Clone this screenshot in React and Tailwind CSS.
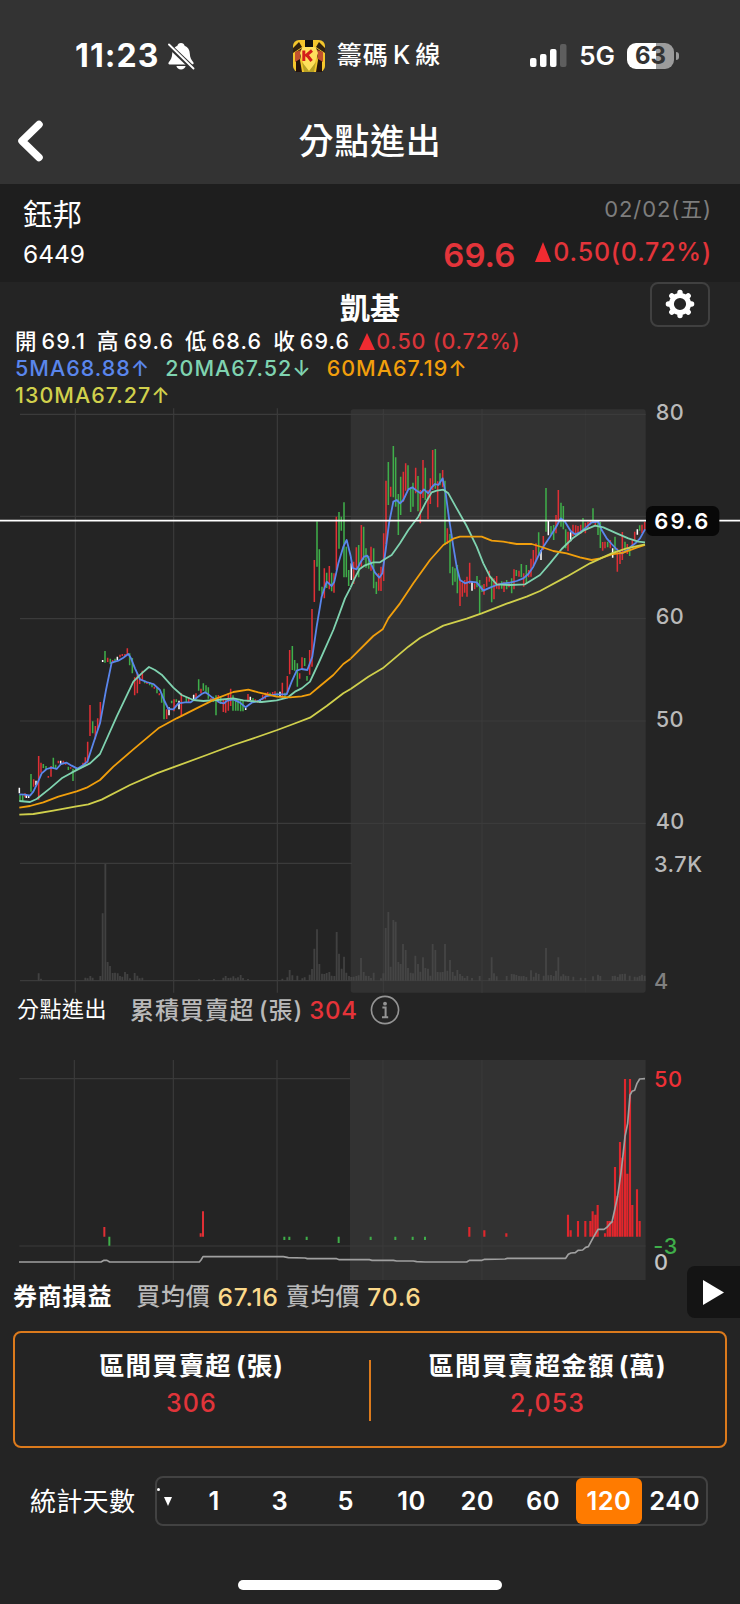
import { useState } from 'react'

const FONT = "font-['Inter','Noto_Sans_CJK_TC',sans-serif]"

const DIAS = ['1', '3', '5', '10', '20', '60', '120', '240']

const COLORS = { up: '#e02f35', down: '#3fae4a', flat: '#ffffff' }

// The charts use 3 units per pixel. "past" starts at the left edge,
// "range" has its origin at the start of the selected 120 days.
const RANGE_X = 1050

const CANDLES = {
  past: {
    up: 'M75 1180V1192M101 1138V1160M116 1068V1199M123 1088V1118M145 1128V1133M153 1098V1130M175 1082V1090M190 1082V1092M197 1090V1094M212 1102V1106M235 1102V1108M249 1088V1102M256 1072V1096M263 1025V1088M270 915V1008M286 978V1018M293 955V990M301 906V968M323 773V786M338 780V790M360 764V772M367 762V768M375 762V768M382 745V764M404 832V886M412 820V880M419 832V852M427 812V840M441 846V852M463 860V866M478 880V886M500 928V957M522 898V934M544 880V950M566 892V908M588 880V896M603 866V880M633 894V900M655 885V908M670 898V936M677 900V938M685 880V932M692 866V918M744 882V906M766 898V906M773 900V908M788 884V900M796 878V898M803 876V888M818 876V886M825 874V888M847 848V890M862 828V880M869 750V823M899 820V836M906 772V810M929 750V824M936 627V800M943 480V606M973 505V595M988 498V568M1002 520V578M1009 350V510',
    down: 'M60 1184V1204M68 1186V1206M93 1122V1175M130 1092V1104M138 1098V1108M160 1073V1106M167 1094V1108M205 1100V1110M219 1106V1143M227 1104V1112M278 964V1000M315 753V788M331 776V792M345 776V786M389 760V796M397 774V820M434 842V850M449 846V856M456 850V862M471 864V880M485 880V908M492 866V958M515 902V910M529 898V906M559 890V906M596 838V872M610 850V872M618 856V880M625 862V896M640 890V906M648 886V946M662 888V912M699 886V932M707 898V932M714 898V932M722 900V934M729 902V934M759 894V906M781 898V906M810 878V886M832 878V888M855 878V894M877 738V810M884 780V812M892 790V860M914 774V798M921 828V842M951 364V500M958 448V572M966 560V584M980 518V564M995 518V574M1017 336V446M1024 350V392M1032 307V532M1039 440V532M1046 510V558',
    flat: 'M58 1163V1180M79 1185V1194M86 1187V1194M108 1142V1156M182 1082V1094M308 780V786M352 770V780M507 922V946M537 902V928M581 884V902M737 924V930M751 890V900M780 899V908M840 875V888',
  },
  range: {
    up: 'M11 485V552M19 442V508M34 375V500M63 440V512M86 520V572M93 500V573M101 400V543M108 242V432M122 260V290M160 215V305M167 190V272M197 203V280M211 270V370M219 180V294M234 270V358M241 235V312M248 150V270M263 244V322M278 210V262M292 385V432M330 540V618M337 548V590M344 540V578M351 530V590M359 488V552M374 550V568M402 552V584M410 530V560M418 512V545M432 535V598M440 528V566M447 548V568M462 545V576M477 545V562M492 508V568M507 512V530M521 520V560M536 510V532M543 476V530M550 450V498M558 430V482M580 408V450M618 345V400M625 270V368M654 395V453M669 374V408M677 376V400M684 378V402M692 374V402M706 368V400M714 366V384M721 360V374M736 362V376M758 426V452M765 425V445M781 420V445M802 445V515M810 462V492M817 396V480M832 432V462M847 420V440M854 395V422M876 374V400M884 366V390',
    down: 'M26 435V532M41 380V480M48 445V503M56 468V506M71 445V565M79 545V582M115 186V315M130 138V292M137 172V320M145 282V405M152 230V345M174 196V268M182 262V336M189 248V320M204 228V334M226 203V300M256 147V266M270 220V256M285 242V435M300 402V520M308 500V556M315 505V545M322 495V580M381 528V562M389 540V640M396 556V576M425 530V607M455 544V566M470 540V568M485 535V580M499 510V528M514 492V532M529 495V550M566 397V468M588 264V395M603 378V402M611 375V420M633 308V380M640 318V388M647 388V445M699 354V390M729 325V370M744 366V405M751 366V444M773 425V442M795 410V458M825 425V455M839 440V468M869 376V392',
    flat: 'M4 490V540M366 543V572M573 450V480M595 363V406M662 397V424M788 445V473M862 388V404',
  },
}

const AVERAGES = [
  {
    name: '5MA68.88↑',
    color: '#5a86ec',
    text: 'text-[#5a86ec]',
    past: '58,1183 75,1184 90,1187 100,1175 112,1150 125,1120 140,1107 155,1103 170,1107 183,1092 200,1088 215,1097 232,1106 250,1095 262,1085 280,1030 300,970 318,870 335,788 355,782 370,773 385,762 393,775 405,805 420,838 440,846 460,852 480,870 492,900 505,927 520,928 535,910 555,907 572,907 590,893 605,882 615,877 625,883 640,895 660,908 672,910 680,903 700,898 720,908 737,922 755,908 775,903 800,888 830,883 860,883 875,845 890,812 905,807 922,810 937,770 950,680 965,590 980,545 995,558 1003,545 1015,490 1030,440 1040,420 1052,468',
    range: '2,468 8,504 20,508 30,490 42,470 52,467 60,485 75,518 88,533 97,520 107,450 117,370 130,305 140,300 150,310 160,300 175,268 187,262 200,272 212,280 222,268 235,280 245,262 255,252 265,255 278,235 287,280 297,355 310,440 320,500 330,540 345,550 360,545 380,547 400,572 420,563 440,555 460,550 480,548 500,543 520,535 535,522 550,500 565,468 580,440 600,410 620,378 632,355 645,365 662,393 675,403 690,397 705,385 725,367 745,365 755,390 770,415 785,432 800,448 815,460 830,452 845,438 858,428 870,415 885,388',
  },
  {
    name: '20MA67.52↓',
    color: '#7fd3b0',
    text: 'text-[#7fd3b0]',
    past: '58,1203 90,1206 110,1197 150,1165 185,1135 215,1118 240,1105 270,1090 300,1062 350,950 400,845 425,820 447,801 465,810 485,824 520,863 545,885 580,900 610,903 650,900 700,895 730,901 785,906 830,901 862,893 885,875 905,865 930,845 960,780 1000,690 1015,650 1035,595 1052,562',
    range: '2,562 14,535 28,508 45,496 70,487 90,487 105,477 125,465 150,430 175,390 205,350 230,302 245,277 260,272 280,269 295,280 320,325 350,378 380,440 400,490 420,530 440,553 480,555 525,553 570,525 600,490 635,447 670,413 700,392 735,377 760,382 800,400 835,415 865,425 885,427',
  },
  {
    name: '60MA67.19↑',
    color: '#f19f0c',
    text: 'text-[#f19f0c]',
    past: '58,1223 90,1218 130,1207 175,1190 230,1174 260,1163 300,1140 340,1100 400,1048 475,985 530,955 600,920 650,895 700,876 745,869 775,877 830,890 870,892 905,889 930,883 960,858 1000,825 1030,792 1052,776',
    range: '2,776 70,708 98,688 115,655 150,610 190,550 240,480 280,435 310,416 330,410 355,410 395,410 425,422 460,425 500,432 545,432 575,441 610,453 650,460 690,472 725,480 750,475 785,463 820,458 860,443 885,435',
  },
  {
    name: '130MA67.27↑',
    color: '#d0d04c',
    text: 'text-[#d0d04c]',
    past: '58,1244 100,1242 160,1232 225,1220 265,1213 305,1199 390,1155 470,1120 525,1100 620,1065 700,1035 760,1015 832,990 880,972 930,953 980,918 1030,880 1052,867',
    range: '2,867 55,830 98,805 175,740 210,714 280,677 350,656 395,640 470,611 530,590 570,573 650,530 720,490 785,460 830,445 885,433',
  },
]

const VOLUME = {
  past: 'M116 1720V1742M123 1736V1742M256 1733V1742M263 1735V1742M271 1728V1742M278 1733V1742M301 1728V1742M308 1540V1742M316 1392V1742M323 1686V1742M330 1698V1742M338 1719V1742M345 1718V1742M353 1720V1742M360 1728V1742M367 1730V1742M375 1716V1742M382 1722V1742M390 1735V1742M404 1719V1742M412 1727V1742M419 1735V1742M427 1733V1742M597 1738V1742M642 1737V1742M670 1733V1742M677 1728V1742M685 1734V1742M692 1733V1742M700 1729V1742M707 1735V1742M714 1732V1742M722 1725V1742M729 1734V1742M744 1737V1742M847 1736V1742M862 1732V1742M869 1710V1742M877 1726V1742M892 1727V1742M907 1735V1742M914 1732V1742M929 1724V1742M936 1707V1742M943 1646V1742M951 1588V1742M958 1692V1742M966 1721V1742M973 1722V1742M980 1719V1742M988 1716V1742M995 1727V1742M1003 1728V1742M1010 1596V1742M1017 1661V1742M1025 1706V1742M1032 1670V1742M1039 1718V1742M1047 1728V1742',
  range:
    'M4 1731V1742M11 1730V1742M19 1728V1742M26 1726V1742M33 1674V1742M41 1716V1742M48 1727V1742M56 1728V1742M63 1734V1742M71 1718V1742M93 1735V1742M100 1720V1742M107 1584V1742M115 1536V1742M122 1700V1742M130 1560V1742M137 1565V1742M145 1686V1742M152 1692V1742M159 1632V1742M167 1650V1742M174 1704V1742M182 1718V1742M189 1720V1742M196 1667V1742M204 1692V1742M211 1715V1742M219 1672V1742M226 1704V1742M234 1706V1742M241 1727V1742M248 1632V1742M256 1650V1742M263 1716V1742M271 1717V1742M278 1716V1742M285 1632V1742M292 1712V1742M300 1680V1742M308 1716V1742M315 1727V1742M322 1710V1742M330 1722V1742M337 1728V1742M344 1734V1742M352 1728V1742M366 1734V1742M389 1728V1742M418 1734V1742M425 1672V1742M432 1720V1742M440 1729V1742M470 1728V1742M485 1722V1742M492 1723V1742M499 1725V1742M507 1728V1742M514 1729V1742M521 1728V1742M529 1731V1742M543 1711V1742M551 1730V1742M558 1718V1742M566 1722V1742M581 1727V1742M588 1644V1742M595 1726V1742M603 1725V1742M611 1728V1742M618 1712V1742M625 1672V1742M633 1729V1742M640 1723V1742M647 1727V1742M655 1728V1742M670 1730V1742M692 1733V1742M706 1734V1742M729 1729V1742M744 1724V1742M751 1728V1742M788 1728V1742M795 1727V1742M803 1731V1742M810 1723V1742M817 1722V1742M825 1721V1742M839 1727V1742M854 1730V1742M862 1732V1742M869 1728V1742M876 1724V1742M884 1727V1742',
}

const NET_UP = {
  past: 'M313 531V560M602 550V560M609 484V560',
  range:
    'M358 531V560M403 541V560M469 550V560M654 494V560M662 541V560M684 513V560M706 513V560M721 513V560M728 484V560M736 494V560M743 465V560M765 550V560M773 513V560M780 513V560M788 513V560M795 351V560M802 438V560M810 276V560M817 323V560M825 87V560M832 371V560M840 87V560M847 465V560M861 418V560M869 513V560',
}

const NET_DOWN = {
  past: 'M328 560V587M853 560V570M868 560V570M920 560V570M1016 560V579',
  range: 'M62 560V570M136 560V570M188 560V570M225 560V570',
}

const AXIS = 'fill-[#b9b9b9] text-[65px] font-medium tracking-[1.5px]'

function StatusBar() {
  return (
    <div className="grid grid-cols-3 items-center px-[75px] pt-[37px] text-white">
      <div className="flex items-center gap-[7px]">
        <span className="text-[32px] leading-9 font-bold tracking-[1.1px]">11:23</span>
        <svg viewBox="0 0 28 28" className="h-7 w-7 shrink-0">
          <path d="M14 1C16 1 17.3 2.2 17.6 3.8 21 5 22.7 8 22.8 11.5 23 16 24.5 18 26.3 20.2 27 21.2 26.6 22.4 25.3 22.4H2.7C1.4 22.4 1 21.2 1.8 20.2 3.6 18 5 16 5.2 11.5 5.3 8 7 5 10.4 3.8 10.7 2.2 12 1 14 1Z" fill="white" />
          <path d="M9.4 24H18.6C18 26.3 16.3 27.5 14 27.5S10 26.3 9.4 24Z" fill="white" />
          <path d="M1 2.5 26.5 27" stroke="#333" strokeWidth="5" />
          <path d="M2 2.5 26.5 26.5" stroke="white" strokeWidth="1.9" strokeLinecap="round" />
        </svg>
      </div>

      <div className="flex items-center justify-center gap-3 pr-[6px]">
        <svg viewBox="0 0 32 32" className="h-8 w-8 shrink-0">
          <rect width="32" height="32" rx="6" fill="#f4c62c" />
          <path d="M0 13 9 7 6 2 0 8ZM32 13 23 7 26 2 32 8Z" fill="#30210f" />
          <path d="M3 12 9 8 7 20 9 32H3ZM29 12 23 8 25 20 23 32H29Z" fill="#25140d" />
          <path d="M2 12 8 10 7 19 2 22ZM30 12 24 10 25 19 30 22Z" fill="#c2512f" />
          <path d="M9 8 13 6H19L23 8 25 13 22 22 20 32H12L10 22 7 13Z" fill="#ffe05c" />
          <path d="M9 22 16 31 23 22 21 32H11Z" fill="#b9a125" />
          <path d="M12 0H20V7H12Z" fill="#111" />
          <path d="M10.8 10.5V21M19 10.5 12.4 16.2M14 15 18.6 21" stroke="#d31f1b" strokeWidth="3" fill="none" />
        </svg>
        <span className="text-[25px] font-medium tracking-[0.8px] [word-spacing:-3px] whitespace-nowrap">籌碼 K 線</span>
      </div>

      <div className="-mr-[14px] flex items-center justify-end">
        <svg viewBox="0 0 37 24" className="h-6 w-[37px] shrink-0">
          <rect x="0" y="14" width="6.5" height="9" rx="2" fill="white" />
          <rect x="10" y="10" width="6.5" height="13" rx="2" fill="white" />
          <rect x="20" y="5" width="6.5" height="18" rx="2" fill="white" />
          <rect x="30" y="0" width="6.5" height="23" rx="2" fill="#5e5e5e" />
        </svg>
        <span className="ml-3 text-[26px] leading-9 font-semibold">5G</span>
        <div className="ml-3 flex h-[26px] w-[47px] shrink-0 items-center justify-center rounded-[9px] bg-[linear-gradient(90deg,#fff_62%,#9c9c9c_62%)] text-2xl font-bold text-[#333]">
          63
        </div>
        <div className="ml-[2px] h-2 w-[3px] rounded-r-full bg-[#9c9c9c]" />
      </div>
    </div>
  )
}

function PriceChart() {
  const halves = ['past', 'range']

  return (
    <svg viewBox="0 12 2220 1776" className="block h-[592px] w-full overflow-visible">
      <rect x="1052" y="28" width="885" height="1750" rx="8" fill="#323232" />
      <path
        d="M60 43H1937M60 349H1937M60 656H1937M60 963H1937M60 1270H1937M60 1390H1056M60 1742H1937M226 25V1778M521 25V1778M832 25V1778M1150 28V1778M1446 28V1778"
        stroke="#3b3b3b"
        strokeWidth="3.5"
      />
      <path d="M1756 28V1778" stroke="#fff" strokeOpacity="0.02" strokeWidth="3" />

      {halves.map((half) => (
        <g key={half} transform={half === 'range' ? `translate(${RANGE_X})` : undefined}>
          <path d={VOLUME[half]} stroke={half === 'range' ? '#454545' : '#414141'} strokeWidth="5.5" />
          {Object.keys(COLORS).map((tone) => (
            <path key={tone} d={CANDLES[half][tone]} stroke={COLORS[tone]} strokeWidth="4.6" />
          ))}
          {AVERAGES.map((ma) => (
            <polyline key={ma.name} points={ma[half]} fill="none" stroke={ma.color} strokeWidth="5.4" strokeLinejoin="round" />
          ))}
        </g>
      ))}

      <text x="1967" y="59" className={AXIS}>80</text>
      <text x="1967" y="673" className={AXIS}>60</text>
      <text x="1967" y="980" className={AXIS}>50</text>
      <text x="1967" y="1288" className={AXIS}>40</text>
      <text x="1962" y="1415" className={AXIS}>3.7K</text>
      <text x="1962" y="1768" className="fill-[#808080] text-[65px] font-medium">4</text>

      {/* last price */}
      <path d="M0 362H2220" stroke="white" strokeWidth="5" />
      <rect x="1938" y="318" width="220" height="90" rx="20" fill="#080808" />
      <text x="1963" y="387" className="fill-white text-[66px] font-semibold tracking-[6px]">69.6</text>
    </svg>
  )
}

function NetChart() {
  return (
    <svg viewBox="0 30 2220 660" className="block h-[220px] w-full overflow-visible">
      <rect x="1050" y="30" width="887" height="660" fill="#323232" />
      <path
        d="M58 86H1050M58 588H1937M223 30V690M520 30V690M831 30V690M1149 30V690M1446 30V690"
        stroke="#3a3a3a"
        strokeWidth="3.5"
      />
      <path d={NET_UP.past} stroke="#e02f35" strokeWidth="6" />
      <path d={NET_DOWN.past} stroke="#3fae4a" strokeWidth="6" />
      <g transform={`translate(${RANGE_X})`}>
        <path d={NET_UP.range} stroke="#e0262c" strokeWidth="6.4" />
        <path d={NET_DOWN.range} stroke="#3fae4a" strokeWidth="6" />
      </g>
      <polyline
        points="57,636 303,636 312,631 321,631 329,636 598,636 603,630 609,620 850,620 865,623 915,624 922,626 1010,626 1018,629 1108,629 1116,631 1180,631 1190,633 1240,633 1250,635 1275,636 1400,636 1408,631 1446,631 1454,628 1515,627 1522,625 1697,625 1705,613 1713,609 1726,608 1734,601 1748,600 1757,592 1765,590 1780,562 1794,538 1812,538 1822,531 1830,521 1836,516 1845,475 1853,438 1862,375 1868,325 1875,260 1883,220 1890,135 1896,124 1904,121 1911,100 1919,87 1935,86"
        fill="none"
        stroke="#a0a0a0"
        strokeWidth="5"
        strokeLinejoin="round"
      />
      <text x="1962" y="111" className="fill-[#ee3036] text-[65px] font-medium tracking-[1.5px]">50</text>
      <text x="1960" y="613" className="fill-[#3fae4a] text-[65px] font-medium tracking-[1.5px]">-3</text>
      <text x="1962" y="661" className="fill-[#c4c4c4] text-[65px] font-medium">0</text>
    </svg>
  )
}

function Ohlc({ label, value }) {
  return (
    <span>
      {label}
      <span className="ml-1">{value}</span>
    </span>
  )
}

function App() {
  const [dia, setDia] = useState('120')

  return (
    <div className={`flex h-[1604px] w-[740px] flex-col overflow-hidden bg-[#242424] text-white ${FONT}`}>
      {/* Header */}
      <header className="h-[184px] shrink-0 bg-[#333333]">
        <StatusBar />
        <div className="mt-10 grid grid-cols-[60px_1fr_60px] items-center">
          <svg viewBox="0 0 26 42" className="ml-[17px] h-[42px] w-[26px]">
            <path d="M22 4.5 5 21 22 37.5" fill="none" stroke="white" strokeWidth="7.5" strokeLinecap="round" strokeLinejoin="round" />
          </svg>
          <h1 className="text-center text-[35px] leading-[52px] font-medium tracking-[0.8px]">分點進出</h1>
        </div>
      </header>

      {/* Stock */}
      <section className="flex h-[98px] shrink-0 justify-between bg-[#1e1e1e] pr-[28px] pl-[23px]">
        <div className="pt-[10px]">
          <div className="text-[29.5px] leading-10">鈺邦</div>
          <div className="text-[24.5px] leading-10">6449</div>
        </div>
        <div className="flex flex-col items-end pt-[9px]">
          <div className="text-[22px] leading-8 tracking-[0.9px] text-[#7d7d7d]">02/02(五)</div>
          <div className="mt-1 flex items-center text-[#e3343a]">
            <span className="pt-[6px] text-[33px] leading-10 font-semibold">69.6</span>
            <svg viewBox="0 0 16 20" className="mr-[2px] ml-5 h-[20px] w-4">
              <path d="M8 0 16 20H0Z" fill="#f02b31" />
            </svg>
            <span className="text-[25px] leading-8 font-medium tracking-[0.8px]">0.50(0.72%)</span>
          </div>
        </div>
      </section>

      {/* Quote */}
      <section className="grid h-[45px] shrink-0 grid-cols-[1fr_auto_1fr] pr-[30px] pl-[30px]">
        <h2 className="col-start-2 pt-1 text-[30px] leading-[44px] font-bold">凱基</h2>
        <button className="flex h-[45px] w-[60px] items-center justify-center justify-self-end rounded-lg border-2 border-[#404040] pr-px pb-px">
          <svg viewBox="-15 -15 30 30" className="h-[30px] w-[30px]" fill="none" stroke="white">
            <circle r="8.6" strokeWidth="5" />
            {[0, 45, 90, 135].map((a) => (
              <path key={a} d="M0-11.6V-10.6M0 10.6V11.6" strokeWidth="5.4" strokeLinecap="round" transform={`rotate(${a})`} />
            ))}
          </svg>
        </button>
      </section>
      <section className="h-[77px] shrink-0 pt-px pl-[15px] text-[21.5px] leading-[27px] font-medium tracking-[1px]">
        <div className="flex items-center gap-[11px] tracking-[1.1px] whitespace-nowrap">
          <Ohlc label="開" value="69.1" />
          <Ohlc label="高" value="69.6" />
          <Ohlc label="低" value="68.6" />
          <Ohlc label="收" value="69.6" />
          <span className="-ml-[2px] flex items-center tracking-[0.8px] text-[#d8353a]">
            <svg viewBox="0 0 16 17" className="mr-px h-[17px] w-4">
              <path d="M8 0 16 17H0Z" fill="#f02b31" />
            </svg>
            0.50 (0.72%)
          </span>
        </div>
        <div className="flex gap-[15px]">
          {AVERAGES.slice(0, 3).map((ma) => (
            <span key={ma.name} className={ma.text}>{ma.name}</span>
          ))}
        </div>
        <div className={AVERAGES[3].text}>{AVERAGES[3].name}</div>
      </section>

      <div className="shrink-0">
        <PriceChart />
      </div>

      {/* Net buy / sell */}
      <section className="-mt-px flex h-[65px] shrink-0 items-start pl-[17px] leading-7 whitespace-nowrap">
        <span className="text-[22px] tracking-[0.5px]">分點進出</span>
        <span className="ml-[23px] text-2xl font-medium tracking-[0.9px] [word-spacing:-3px] text-[#b9b9b9]">累積買賣超 (張)</span>
        <span className="ml-[6px] text-2xl font-medium tracking-[0.8px] text-[#e63339]">304</span>
        <svg viewBox="0 0 30 30" className="ml-[12px] h-[30px] w-[30px]">
          <circle cx="15" cy="15" r="13.6" fill="none" stroke="#949494" strokeWidth="1.6" />
          <circle cx="15" cy="8.7" r="1.9" fill="#949494" />
          <path d="M12.4 12.6H15.6V22M12 22.2H18.2" fill="none" stroke="#949494" strokeWidth="2" />
        </svg>
      </section>

      <div className="shrink-0">
        <NetChart />
      </div>

      {/* Broker cost */}
      <section className="relative flex h-[51px] shrink-0 items-start pl-[13px] text-2xl leading-[34px] font-medium tracking-[0.8px] whitespace-nowrap">
        <span className="font-bold">券商損益</span>
        <span className="ml-6 text-[#b9b9b9]">買均價</span>
        <span className="ml-[7px] text-[24.5px] text-[#fbd98b]">67.16</span>
        <span className="ml-[7px] text-[#b9b9b9]">賣均價</span>
        <span className="ml-[7px] text-[24.5px] text-[#fbd98b]">70.6</span>
        <button className="absolute -top-[14px] right-0 flex h-[52px] w-[53px] items-center justify-center rounded-l-lg bg-[#141414]">
          <svg viewBox="0 0 21 25" className="h-[25px] w-[21px]">
            <path d="M0 0 21 12.5 0 25Z" fill="white" />
          </svg>
        </button>
      </section>

      <section className="mx-[13px] grid h-[117px] shrink-0 grid-cols-2 rounded-lg border-2 border-[#dc7a1c] pt-[15px] text-center text-[25.5px] leading-9 font-medium tracking-[1.1px] whitespace-nowrap">
        <div className="pr-[2px]">
          <div className="font-bold [word-spacing:-3px]">區間買賣超 (張)</div>
          <div className="mt-px text-[25px]  text-[#e0343a]">306</div>
        </div>
        <div className="relative before:absolute before:top-[12px] before:left-[-1px] before:h-[61px] before:w-[2px] before:bg-[#dc7a1c]">
          <div className="font-bold [word-spacing:-3px]">區間買賣超金額 (萬)</div>
          <div className="mt-px text-[25px] text-[#e0343a]">2,053</div>
        </div>
      </section>

      {/* Days */}
      <section className="mt-7 flex shrink-0 items-center pl-[30px]">
        <span className="text-[26px] tracking-[0.3px] whitespace-nowrap">統計天數</span>
        <div className="ml-5 flex h-[50px] w-[553px] items-stretch rounded-lg border-2 border-[#424242]">
          <div className="flex w-6 shrink-0 items-center gap-1">
            <span className="mb-6 h-[3px] w-[3px] rounded-full bg-white" />
            <svg viewBox="0 0 8 9" className="h-[9px] w-2">
              <path d="M0 0H8L4 9Z" fill="white" />
            </svg>
          </div>
          {DIAS.map((d) => (
            <button
              key={d}
              onClick={() => setDia(d)}
              className={`flex w-[65.8px] shrink-0 items-center justify-center text-[25.5px] font-semibold tracking-[0.5px] ${
                dia === d ? 'rounded-md bg-[#ff7b00]' : ''
              }`}
            >
              {d}
            </button>
          ))}
        </div>
      </section>

      <div className="mt-auto mb-[14px] h-[10px] w-[264px] shrink-0 self-center rounded-full bg-white" />
    </div>
  )
}

export default App
